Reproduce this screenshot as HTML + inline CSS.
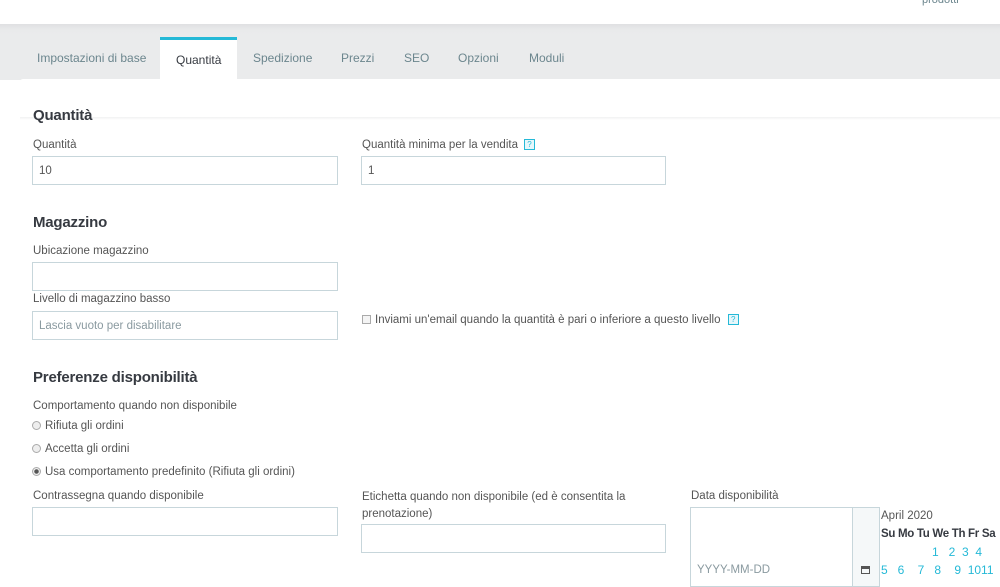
<!DOCTYPE html>
<html><head><meta charset="utf-8"><style>
*{margin:0;padding:0;box-sizing:border-box}
body{width:1000px;height:576px;overflow:hidden;background:#fff;font-family:"Liberation Sans",sans-serif;font-size:11.5px;color:#555;position:relative;letter-spacing:0}
.a{position:absolute;white-space:nowrap}
.inp{position:absolute;border:1px solid #c7d6db;background:#fff;height:29px;padding:8px 6px;font-size:11.5px;color:#555}
.h{position:absolute;font-size:15px;font-weight:bold;color:#363a41;letter-spacing:-0.2px}
.q{display:inline-block;width:11px;height:11px;border:1px solid #25b9d7;background:#e6f7fb;color:#25b9d7;font-size:8px;line-height:9px;text-align:center;vertical-align:middle;margin-left:6px}
.rad{display:inline-block;width:9px;height:9px;border:1px solid #aaa;border-radius:50%;background:#eee;vertical-align:-1px;margin-right:4px;position:relative}
.tab{position:absolute;top:51px;color:#6c868e;font-size:12px}
.cal{color:#25b9d7}
</style></head><body>
<div class="a" style="left:0;top:0;width:1000px;height:24px;background:#fff"></div>
<div class="a" style="left:922px;top:-6px;color:#6c868e;font-size:11px">prodotti</div>
<div class="a" style="left:0;top:24px;width:1000px;height:56px;background:linear-gradient(#dfe0e2,#e9eaeb 6px,#eaebec 12px,#eaebec)"></div>
<div class="a" style="left:20px;top:79px;width:980px;height:497px;background:#fff;border-radius:3px 0 0 0"></div>
<div class="a" style="left:20px;top:117px;width:980px;height:3px;background:linear-gradient(#f0f1f2,#fff)"></div>
<div class="a" style="left:160px;top:37px;width:77px;height:43px;background:#fff;border-top:3px solid #25b9d7"></div>
<div class="tab" style="left:37px">Impostazioni di base</div>
<div class="tab" style="left:176px;top:53px;color:#363a41">Quantità</div>
<div class="tab" style="left:253px">Spedizione</div>
<div class="tab" style="left:341px">Prezzi</div>
<div class="tab" style="left:404px">SEO</div>
<div class="tab" style="left:458px">Opzioni</div>
<div class="tab" style="left:529px">Moduli</div>

<div class="h" style="left:33px;top:107px">Quantità</div>
<div class="a" style="left:33px;top:139px">Quantità</div>
<div class="a" style="left:362px;top:139px">Quantità minima per la vendita<span class="q">?</span></div>
<div class="inp" style="left:32px;top:156px;width:306px">10</div>
<div class="inp" style="left:361px;top:156px;width:305px">1</div>

<div class="h" style="left:33px;top:214px">Magazzino</div>
<div class="a" style="left:33px;top:245px">Ubicazione magazzino</div>
<div class="inp" style="left:32px;top:262px;width:306px"></div>
<div class="a" style="left:33px;top:293px">Livello di magazzino basso</div>
<div class="inp" style="left:32px;top:311px;width:306px;color:#8a9aa0">Lascia vuoto per disabilitare</div>
<div class="a" style="left:362px;top:314px"><span style="display:inline-block;width:9px;height:9px;border:1px solid #aaa;background:#f4f4f4;vertical-align:-1px;margin-right:4px"></span>Inviami un'email quando la quantità è pari o inferiore a questo livello <span class="q" style="margin-left:4px">?</span></div>

<div class="h" style="left:33px;top:369px">Preferenze disponibilità</div>
<div class="a" style="left:33px;top:400px">Comportamento quando non disponibile</div>
<div class="a" style="left:32px;top:420px"><span class="rad"></span>Rifiuta gli ordini</div>
<div class="a" style="left:32px;top:443px"><span class="rad"></span>Accetta gli ordini</div>
<div class="a" style="left:32px;top:466px"><span class="rad" style="background:radial-gradient(#555 2px,#eee 2.5px)"></span>Usa comportamento predefinito (Rifiuta gli ordini)</div>

<div class="a" style="left:33px;top:490px">Contrassegna quando disponibile</div>
<div class="inp" style="left:32px;top:507px;width:306px"></div>
<div class="a" style="left:362px;top:489px;line-height:17px">Etichetta quando non disponibile (ed è consentita la<br>prenotazione)</div>
<div class="inp" style="left:361px;top:524px;width:305px"></div>
<div class="a" style="left:691px;top:490px">Data disponibilità</div>
<div class="inp" style="left:690px;top:507px;width:190px;height:80px;padding:0"></div>
<div class="a" style="left:852px;top:507px;width:28px;height:80px;background:#f5f8f9;border:1px solid #c7d6db"></div>
<div class="a" style="left:697px;top:564px;color:#8a9aa0">YYYY-MM-DD</div>
<div class="a" style="left:861px;top:566px;width:9px;height:8px;border:1.5px solid #555;border-top-width:3px"></div>
<div class="a" style="left:881px;top:510px">April 2020</div>
<div class="a" style="left:881px;top:528px;font-weight:bold;color:#363a41;font-size:11.5px;letter-spacing:-0.3px">Su Mo Tu We Th Fr Sa</div>
<div class="a cal" style="left:932px;top:545px;font-size:12px">1&nbsp;&nbsp;&nbsp;2&nbsp;&nbsp;3&nbsp;&nbsp;4</div>
<div class="a cal" style="left:881px;top:563px;font-size:12px">5&nbsp;&nbsp;&nbsp;6&nbsp;&nbsp;&nbsp;&nbsp;7&nbsp;&nbsp;&nbsp;8&nbsp;&nbsp;&nbsp;&nbsp;9&nbsp;&nbsp;1011</div>
</body></html>
